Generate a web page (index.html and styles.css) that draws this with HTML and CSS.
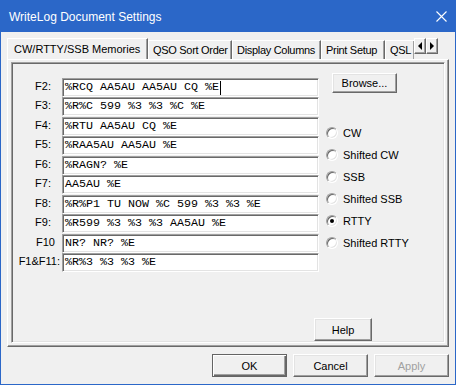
FILE: index.html
```html
<!DOCTYPE html>
<html lang="en">
<head>
    <meta charset="UTF-8">
    <title>WriteLog Document Settings</title>
    <link rel="stylesheet" href="styles.css">
</head>
<body>
    <div class="window">
        <div class="titlebar">
            <span class="title">WriteLog Document Settings</span>
            <svg class="close" width="11" height="11" viewBox="0 0 11 11">
                <path d="M0.5 0.5 L10.5 10.5 M10.5 0.5 L0.5 10.5" stroke="#fff" stroke-width="1.1" fill="none"/>
            </svg>
        </div>

        <div class="client">
            <div class="tabs">
                <div class="tab-list">
                    <div class="tab active tab-mem">CW/RTTY/SSB Memories</div>
                    <div class="tab tab-sort">QSO Sort Order</div>
                    <div class="tab tab-cols">Display Columns</div>
                    <div class="tab tab-print">Print Setup</div>
                    <div class="tab tab-qsl">QSL</div>
                </div>
                <div class="tab-arrows">
                    <span class="arrow-btn"><i class="tri tri-left"></i></span>
                    <span class="arrow-btn"><i class="tri tri-right"></i></span>
                </div>
            </div>

            <div class="panel">
                <div class="group">
                    <div class="group-main">
                        <div class="memories">
                            <div class="row"><label>F2:</label><div class="edit">%RCQ AA5AU AA5AU CQ %E<span class="caret"></span></div></div>
                            <div class="row"><label>F3:</label><div class="edit">%R%C 599 %3 %3 %C %E</div></div>
                            <div class="row"><label>F4:</label><div class="edit">%RTU AA5AU CQ %E</div></div>
                            <div class="row"><label>F5:</label><div class="edit">%RAA5AU AA5AU %E</div></div>
                            <div class="row"><label>F6:</label><div class="edit">%RAGN? %E</div></div>
                            <div class="row"><label>F7:</label><div class="edit">AA5AU %E</div></div>
                            <div class="row"><label>F8:</label><div class="edit">%R%P1 TU NOW %C 599 %3 %3 %E</div></div>
                            <div class="row"><label>F9:</label><div class="edit">%R599 %3 %3 %3 AA5AU %E</div></div>
                            <div class="row"><label class="nocolon">F10</label><div class="edit">NR? NR? %E</div></div>
                            <div class="row"><label class="wide">F1&amp;F11:</label><div class="edit">%R%3 %3 %3 %E</div></div>
                        </div>

                        <div class="side">
                            <button class="btn btn-browse">Browse...</button>
                            <div class="radios">
                                <div class="radio-row"><span class="radio"></span>CW</div>
                                <div class="radio-row"><span class="radio"></span>Shifted CW</div>
                                <div class="radio-row"><span class="radio"></span>SSB</div>
                                <div class="radio-row"><span class="radio"></span>Shifted SSB</div>
                                <div class="radio-row"><span class="radio checked"></span>RTTY</div>
                                <div class="radio-row"><span class="radio"></span>Shifted RTTY</div>
                            </div>
                        </div>
                    </div>

                    <div class="group-foot">
                        <button class="btn btn-help">Help</button>
                    </div>
                </div>
            </div>

            <div class="actions">
                <button class="btn btn-action btn-default">OK</button>
                <button class="btn btn-action">Cancel</button>
                <button class="btn btn-action" disabled>Apply</button>
            </div>
        </div>
    </div>
</body>
</html>
```

FILE: styles.css
```css
body {
    margin: 0;
    font-family: "Liberation Sans", Arial, sans-serif;
    font-size: 11px;
    color: #000;
    background: #f0f0f0;
}

.window {
    box-sizing: border-box;
    width: 456px;
    height: 385px;
    border: 1px solid #2b67c8;
    border-top: none;
    background: #f0f0f0;
}

/* title bar */
.titlebar {
    height: 32px;
    margin: 0 -1px;
    padding: 0 9px 0 9px;
    background: #2b67c8;
    display: flex;
    align-items: center;
    justify-content: space-between;
}

.title {
    color: #fff;
    font-size: 12px;
    padding-top: 1px;
}

.close {
    display: block;
    margin-top: 1px;
}

.client {
    padding: 6px 6px 0 6px;
}

/* tabs */
.tabs {
    height: 21px;
    display: flex;
    align-items: flex-start;
}

.tab-list {
    width: 407px;
    height: 21px;
    display: flex;
    align-items: flex-end;
    overflow: hidden;
}

.tab {
    box-sizing: border-box;
    flex: none;
    height: 19px;
    border-top: 1px solid #fff;
    border-left: 1px solid #fff;
    border-right: 1px solid #696969;
    box-shadow: inset -1px 0 #a0a0a0;
    padding: 3px 0 0 4px;
    letter-spacing: -0.3px;
    white-space: nowrap;
}

.tab.active {
    position: relative;
    z-index: 1;
    height: 22px;
    margin-bottom: -1px;
    padding: 4px 0 0 6px;
    letter-spacing: 0;
    background: #f0f0f0;
}

.tab-mem { width: 141px; }
.tab-sort { width: 84px; }
.tab-cols { width: 89px; }
.tab-print { width: 64px; }
.tab-qsl { width: 30px; }

.tab-arrows {
    display: flex;
}

.arrow-btn {
    box-sizing: border-box;
    width: 12px;
    height: 16px;
    border: 1px solid;
    border-color: #fff #696969 #696969 #fff;
    box-shadow: inset -1px -1px #a0a0a0;
    background: #f0f0f0;
    display: flex;
    align-items: center;
    justify-content: center;
}

.tri {
    width: 0;
    height: 0;
    border-top: 4px solid transparent;
    border-bottom: 4px solid transparent;
}

.tri-left {
    border-right: 4px solid #000;
}

.tri-right {
    border-left: 4px solid #000;
}

/* tab page */
.panel {
    box-sizing: border-box;
    height: 288px;
    border: 1px solid;
    border-color: #fff #696969 #696969 #fff;
    box-shadow: inset -1px -1px #a0a0a0;
    padding: 2px 3px 3px 3px;
}

.group {
    box-sizing: border-box;
    height: 100%;
    border: 1px solid;
    border-color: #a0a0a0 #fff #fff #a0a0a0;
    box-shadow: inset 1px 1px #696969, inset -1px -1px #e3e3e3;
    padding: 10px 0 0 2px;
    display: flex;
    flex-direction: column;
}

.group-main {
    display: flex;
    gap: 7px;
}

.memories {
    margin-top: 5px;
}

.row {
    display: flex;
    align-items: flex-start;
    gap: 10px;
    height: 19px;
}

.row:nth-child(even) {
    height: 20px;
}

.row label {
    flex: none;
    width: 37px;
    margin-right: 1px;
    height: 19px;
    line-height: 17px;
    white-space: nowrap;
    display: flex;
    justify-content: flex-end;
}

.row label.nocolon {
    width: 41px;
    margin-right: -3px;
}

.row label.wide {
    width: 46px;
    margin-right: -8px;
}

.edit {
    box-sizing: border-box;
    width: 257px;
    height: 19px;
    border: 1px solid;
    border-color: #a0a0a0 #fff #fff #a0a0a0;
    box-shadow: inset 1px 1px #696969, inset -1px -1px #e3e3e3;
    background: #fff;
    padding: 0 0 0 2px;
    font-family: "Liberation Mono", "Courier New", monospace;
    font-size: 11.67px;
    line-height: 17px;
    white-space: pre;
    display: flex;
    align-items: center;
}

.caret {
    width: 1px;
    height: 14px;
    background: #000;
    margin-left: 1px;
}

/* right column */
.side {
    display: flex;
    flex-direction: column;
    align-items: flex-start;
}

.btn {
    box-sizing: border-box;
    font-family: "Liberation Sans", Arial, sans-serif;
    font-size: 11px;
    color: #000;
    background: #f0f0f0;
    border: 1px solid;
    border-color: #fff #696969 #696969 #fff;
    box-shadow: inset -1px -1px #a0a0a0, inset 1px 1px #e3e3e3;
    padding: 0;
}

.btn-browse {
    width: 65px;
    height: 20px;
    margin-left: 6px;
}

.radios {
    margin-top: 29px;
}

.radio-row {
    height: 22px;
    display: flex;
    align-items: center;
    gap: 5px;
}

.radio {
    box-sizing: border-box;
    width: 12px;
    height: 12px;
    border-radius: 50%;
    border: 1px solid;
    border-color: #a0a0a0 #fff #fff #a0a0a0;
    box-shadow: inset 1px 1px #696969, inset -1px -1px #e3e3e3;
    background: #fff;
    display: flex;
    align-items: center;
    justify-content: center;
}

.radio.checked::after {
    content: "";
    width: 4px;
    height: 4px;
    border-radius: 50%;
    background: #000;
}

.group-foot {
    margin-top: auto;
    padding: 0 0 1px 300px;
}

.btn-help {
    width: 58px;
    height: 23px;
}

/* dialog buttons */
.actions {
    display: flex;
    justify-content: flex-end;
    gap: 6px;
    margin-top: 7px;
}

.btn-action {
    width: 75px;
    height: 23px;
}

.btn-default {
    border-color: #646464;
    box-shadow: inset 1px 1px #fff, inset -1px -1px #696969, inset -2px -2px #a0a0a0;
}

.btn:disabled {
    color: #a0a0a0;
}
```
